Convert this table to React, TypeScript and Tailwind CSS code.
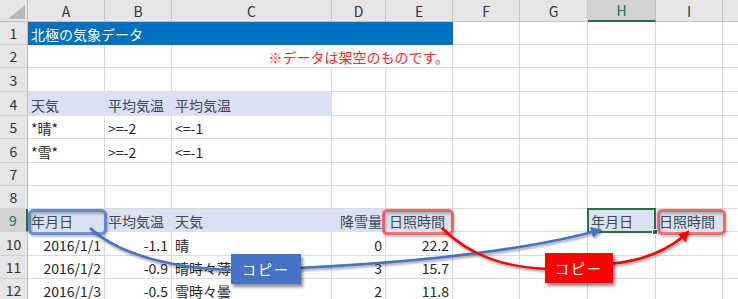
import React from "react"

type Kind = "title" | "note" | "head" | "plain"
type Cell = { t?: string; r?: boolean; span?: number; kind?: Kind; sel?: boolean }

const COLS = ["A", "B", "C", "D", "E", "F", "G", "H", "I", "J"]

const e = (n: number): Cell[] => Array.from({ length: n }, () => ({}))
const h = (t: string, r = false): Cell => ({ t, r, kind: "head" })
const p = (t: string, r = false): Cell => ({ t, r })

const rows: Cell[][] = [
  [{ t: "北極の気象データ", span: 5, kind: "title" }, ...e(5)],
  [{}, {}, { t: "※データは架空のものです。", span: 3, r: true, kind: "note" }, ...e(5)],
  e(10),
  [h("天気"), h("平均気温"), h("平均気温"), ...e(7)],
  [p("*晴*"), p(">=-2"), p("<=-1"), ...e(7)],
  [p("*雪*"), p(">=-2"), p("<=-1"), ...e(7)],
  e(10),
  e(10),
  [h("年月日"), h("平均気温"), h("天気"), h("降雪量", true), h("日照時間"), {}, {}, { t: "年月日", kind: "head", sel: true }, h("日照時間"), {}],
  [p("2016/1/1", true), p("-1.1", true), p("晴"), p("0", true), p("22.2", true), ...e(5)],
  [p("2016/1/2", true), p("-0.9", true), p("晴時々薄"), p("3", true), p("15.7", true), ...e(5)],
  [p("2016/1/3", true), p("-0.5", true), p("雪時々曇"), p("2", true), p("11.8", true), ...e(5)],
]

function cellClass(c: Cell) {
  const base = "flex items-end leading-none pb-[3px] px-[3px] whitespace-nowrap border-r border-b"
  const align = c.r ? " justify-end" : ""
  let look = " border-[#dadada] text-[#262626]"
  if (c.kind === "title") look = " bg-[#0070c0] border-[#0070c0] text-white"
  if (c.kind === "note") look = " border-[#dadada] text-[#ff2a2a]"
  if (c.kind === "head") look = " bg-[#d9e1f2] border-[#d9e1f2] text-[#3f4859]"
  const span = c.span === 5 ? " col-span-5" : c.span === 3 ? " col-span-3" : ""
  return base + align + look + span
}

export default function App() {
  return (
    <div className="relative w-[738px] h-[299px] overflow-hidden bg-white font-['Noto_Sans_CJK_JP',sans-serif] text-[14px]">
      <div className="grid w-max grid-cols-[28px_77px_67px_160px_54px_67px_67px_68px_68px_67px_67px] grid-rows-[22px_23px_23px_24px_24px_23px_24px_23px_23px_23px_24px_23px_23px]">
        {/* corner */}
        <div className="relative bg-[#e6e6e6] border-r border-b border-[#bdbdbd]">
          <svg className="absolute left-0 top-0" width="28" height="22">
            <polygon points="8,19 25,19 25,5" fill="#b9b9b9" />
          </svg>
        </div>
        {COLS.map((c) => (
          <div
            key={c}
            className={
              c === "H"
                ? "flex items-center justify-center bg-[#d2d2d2] border-r border-[#bdbdbd] border-b-2 border-b-[#217346] text-[#217346] leading-none"
                : "flex items-center justify-center bg-[#e6e6e6] border-r border-b border-[#c6c6c6] text-[#333] leading-none"
            }
          >
            {c}
          </div>
        ))}

        {rows.map((row, i) => (
          <React.Fragment key={i}>
            <div
              className={
                i === 8
                  ? "flex items-center justify-center bg-[#d2d2d2] border-b border-b-[#cfcfcf] border-r-2 border-r-[#217346] text-[#217346] leading-none"
                  : "flex items-center justify-center bg-[#e6e6e6] border-b border-r border-b-[#d0d0d0] border-r-[#bdbdbd] text-[#333] leading-none"
              }
            >
              {i + 1}
            </div>
            {row.map((c, j) => (
              <div key={j} className={cellClass(c)}>
                {c.t}
              </div>
            ))}
          </React.Fragment>
        ))}
      </div>

      {/* selected cell H9 */}
      <div className="absolute left-[587px] top-[208px] w-[69px] h-[25px] border-2 border-[#217346]" />
      <div className="absolute left-[652px] top-[229px] w-[6px] h-[6px] bg-[#217346] border border-white" />

      {/* callout frames and arrows */}
      <svg className="absolute left-0 top-0" width="738" height="299">
        <defs>
          <filter id="sh" x="-20%" y="-20%" width="140%" height="160%">
            <feDropShadow dx="1" dy="2" stdDeviation="1.2" floodColor="#000" floodOpacity="0.35" />
          </filter>
          <marker id="hb" viewBox="0 0 10 10" refX="8" refY="5" markerWidth="11" markerHeight="11" markerUnits="userSpaceOnUse" orient="auto">
            <path d="M0,0 L10,5 L0,10 z" fill="#4472c4" />
          </marker>
          <marker id="hr" viewBox="0 0 10 10" refX="8" refY="5" markerWidth="11" markerHeight="11" markerUnits="userSpaceOnUse" orient="auto">
            <path d="M0,0 L10,5 L0,10 z" fill="#ff0000" />
          </marker>
        </defs>
        <rect x="29.5" y="210.5" width="76" height="23" rx="4" fill="none" stroke="rgba(68,114,196,0.75)" strokeWidth="3" filter="url(#sh)" />
        <rect x="383.5" y="210.5" width="69" height="23" rx="4" fill="none" stroke="rgba(255,40,40,0.65)" strokeWidth="3" filter="url(#sh)" />
        <rect x="658.5" y="210.5" width="66" height="23" rx="4" fill="none" stroke="rgba(255,40,40,0.65)" strokeWidth="3" filter="url(#sh)" />

        <g filter="url(#sh)" fill="none" strokeWidth="2.5">
          <path d="M90 228 C 125 260, 190 270, 240 270" stroke="#4472c4" />
          <path d="M298 268 C 400 263, 520 252, 600 230" stroke="#4472c4" markerEnd="url(#hb)" />
          <path d="M442 228 C 470 256, 505 268, 552 269" stroke="#ff0000" />
          <path d="M608 264 C 640 262, 670 250, 688 232" stroke="#ff0000" markerEnd="url(#hr)" />
        </g>
      </svg>

      <div className="absolute left-[231px] top-[254px] w-[70px] h-[30px] flex items-center justify-center bg-[#4472c4] text-white tracking-[2px] shadow-[2px_3px_3px_rgba(0,0,0,0.45)]">
        コピー
      </div>
      <div className="absolute left-[545px] top-[253px] w-[68px] h-[30px] flex items-center justify-center bg-[#ff0000] text-white tracking-[2px] shadow-[2px_3px_3px_rgba(0,0,0,0.45)]">
        コピー
      </div>
    </div>
  )
}
